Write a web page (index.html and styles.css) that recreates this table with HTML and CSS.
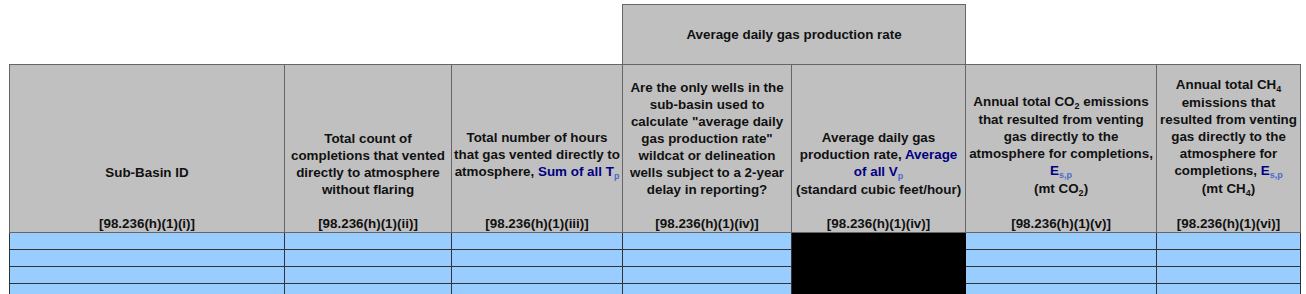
FILE: index.html
```html
<!DOCTYPE html>
<html>
<head>
<meta charset="utf-8">
<link rel="stylesheet" href="styles.css">
</head>
<body>
<div class="sheet">
<table class="grid">
<colgroup>
<col class="c1"><col class="c2"><col class="c3"><col class="c4"><col class="c5"><col class="c6"><col class="c7">
</colgroup>
<tr class="group-row">
<td class="blank" colspan="3"></td>
<th class="group" colspan="2">Average daily gas production rate</th>
<td class="blank" colspan="2"></td>
</tr>
<tr class="head-row">
<th><div class="txt">Sub-Basin ID</div><div class="ref gap2">[98.236(h)(1)(i)]</div></th>
<th><div class="txt">Total count of<br>completions that vented<br>directly to atmosphere<br>without flaring</div><div class="ref">[98.236(h)(1)(ii)]</div></th>
<th><div class="txt">Total number of hours<br>that gas vented directly to<br>atmosphere, <span class="var">Sum of all T<sub class="lt">p</sub></span></div><div class="ref gap2">[98.236(h)(1)(iii)]</div></th>
<th><div class="txt">Are the only wells in the<br>sub-basin used to<br>calculate "average daily<br>gas production rate"<br>wildcat or delineation<br>wells subject to a 2-year<br>delay in reporting?</div><div class="ref">[98.236(h)(1)(iv)]</div></th>
<th><div class="txt">Average daily gas<br>production rate, <span class="var">Average<br>of all V<sub class="lt">p</sub></span><br>(standard cubic feet/hour)</div><div class="ref">[98.236(h)(1)(iv)]</div></th>
<th><div class="txt">Annual total CO<sub>2</sub> emissions<br>that resulted from venting<br>gas directly to the<br>atmosphere for completions,<br><span class="var">E<sub class="lt">s,p</sub></span><br>(mt CO<sub>2</sub>)</div><div class="ref">[98.236(h)(1)(v)]</div></th>
<th><div class="txt">Annual total CH<sub>4</sub><br>emissions that<br>resulted from venting<br>gas directly to the<br>atmosphere for<br>completions, <span class="var">E<sub class="lt">s,p</sub></span><br>(mt CH<sub>4</sub>)</div><div class="ref">[98.236(h)(1)(vi)]</div></th>
</tr>
<tr class="data"><td></td><td></td><td></td><td></td><td class="na"></td><td></td><td></td></tr>
<tr class="data"><td></td><td></td><td></td><td></td><td class="na"></td><td></td><td></td></tr>
<tr class="data"><td></td><td></td><td></td><td></td><td class="na"></td><td></td><td></td></tr>
<tr class="data"><td></td><td></td><td></td><td></td><td class="na"></td><td></td><td></td></tr>
<tr class="data"><td></td><td></td><td></td><td></td><td class="na"></td><td></td><td></td></tr>
</table>
</div>
</body>
</html>
```
FILE: styles.css
```css
html, body {
  margin: 0;
  padding: 0;
  background: #ffffff;
  overflow: hidden;
}
.sheet {
  padding: 4px 0 0 9px;
  font-family: "Liberation Sans", Arial, sans-serif;
  font-size: 13.4px;
  font-weight: bold;
  color: #111;
}
.grid {
  border-collapse: collapse;
  table-layout: fixed;
  width: 1291px;
}
.c1 { width: 275px; }
.c2 { width: 167px; }
.c3 { width: 171px; }
.c4 { width: 169px; }
.c5 { width: 174px; }
.c6 { width: 191px; }
.c7 { width: 144px; }

.blank {
  border: none;
  padding: 0;
}
.group-row {
  height: 60px;
}
.group {
  background: #c0c0c0;
  border: 1px solid #666;
  text-align: center;
  vertical-align: middle;
  font-weight: bold;
  padding: 0;
  line-height: 17px;
}
.head-row {
  height: 168px;
}
.head-row th {
  background: #c0c0c0;
  border: 1px solid #666;
  text-align: center;
  vertical-align: bottom;
  font-weight: bold;
  line-height: 17px;
  padding: 0;
  white-space: nowrap;
}
.ref {
  margin-top: 17px;
}
.ref.gap2 {
  margin-top: 34px;
}
.var {
  color: #000080;
}
sub {
  font-size: 9px;
  line-height: 1;
  vertical-align: -3px;
}
sub.lt {
  color: #4a6ad0;
}
.data td {
  height: 16px;
  padding: 0;
  background: #99ccff;
  border: 1px solid #333;
}
.data td.na {
  background: #000;
  border-color: #000;
}
```
